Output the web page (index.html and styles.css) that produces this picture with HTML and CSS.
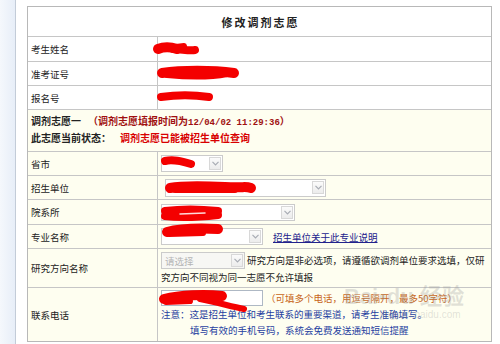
FILE: index.html
```html
<!DOCTYPE html>
<html lang="zh-CN">
<head>
<meta charset="utf-8">
<title>修改调剂志愿</title>
<link rel="stylesheet" href="styles.css">
</head>
<body>
<div class="page">
  <div class="side"></div>
  <div class="main">
    <div class="form">
      <div class="row title">修改调剂志愿</div>

      <div class="row h25">
        <div class="lbl">考生姓名</div>
        <div class="val">
          <svg class="mark" style="left:-5px;top:6px" width="46" height="12" viewBox="0 0 46 12"><path class="fat" d="M5 6 C 10 4, 18 4, 24 6" /><path d="M20 6 C 28 6, 36 8, 42 7" /><path class="thin" d="M23 4 L 31 3" /></svg>
        </div>
      </div>
      <div class="row h24">
        <div class="lbl">准考证号</div>
        <div class="val">
          <svg class="mark" style="left:-1px;top:4px" width="82" height="14" viewBox="0 0 82 14"><path class="fat" d="M5 7 C 25 4, 55 4, 77 7" /><path class="thin" d="M10 9 C 30 11, 55 11, 70 8" /></svg>
        </div>
      </div>
      <div class="row h24">
        <div class="lbl">报名号</div>
        <div class="val">
          <svg class="mark" style="left:-1px;top:6px" width="56" height="10" viewBox="0 0 56 10"><path d="M4 5 C 18 3, 38 3, 52 5" /></svg>
        </div>
      </div>

      <div class="row cream status">
        <div class="line">调剂志愿一<span class="time">（调剂志愿填报时间为<span class="mono">12/04/02 11:29:36</span>）</span></div>
        <div class="line">此志愿当前状态：<span class="state">调剂志愿已能被招生单位查询</span></div>
      </div>

      <div class="row cream h24">
        <div class="lbl">省市</div>
        <div class="val">
          <span class="sel w62"><span class="arr"><svg width="7" height="5" viewBox="0 0 7 5"><path d="M0.5 0.8 L3.5 3.8 L6.5 0.8"/></svg></span></span>
          <svg class="mark" style="left:3px;top:4px" width="34" height="13" viewBox="0 0 34 13"><path d="M4 5 C 12 3, 20 5, 30 8" /></svg>
        </div>
      </div>
      <div class="row cream h24">
        <div class="lbl">招生单位</div>
        <div class="val">
          <span class="sel w161 off4 tall"><span class="arr"><svg width="7" height="5" viewBox="0 0 7 5"><path d="M0.5 0.8 L3.5 3.8 L6.5 0.8"/></svg></span></span>
          <svg class="mark" style="left:7px;top:4px" width="92" height="15" viewBox="0 0 92 15"><path class="fat" d="M5 8 C 20 5, 40 6, 60 7 S 80 6, 86 8" /><path class="thin" d="M10 10 L 70 10" /></svg>
        </div>
      </div>
      <div class="row cream h25">
        <div class="lbl">院系所</div>
        <div class="val">
          <span class="sel w134"><span class="arr"><svg width="7" height="5" viewBox="0 0 7 5"><path d="M0.5 0.8 L3.5 3.8 L6.5 0.8"/></svg></span></span>
          <svg class="mark" style="left:2px;top:5px" width="64" height="16" viewBox="0 0 64 16"><path d="M5 6 C 20 4, 40 4, 58 6" /><path d="M5 11 C 20 13, 40 12, 58 10" /><path class="streak" d="M20 9 L 45 8" /></svg>
        </div>
      </div>
      <div class="row cream h24">
        <div class="lbl">专业名称</div>
        <div class="val">
          <span class="sel w102"><span class="arr"><svg width="7" height="5" viewBox="0 0 7 5"><path d="M0.5 0.8 L3.5 3.8 L6.5 0.8"/></svg></span></span>
          <a class="link" href="#">招生单位关于此专业说明</a>
          <svg class="mark" style="left:5px;top:0px" width="60" height="14" viewBox="0 0 60 14"><path class="fat" d="M4 7 C 15 4, 35 3, 55 4" /><path class="thin" d="M6 9 L 40 8" /></svg>
        </div>
      </div>
      <div class="row cream h39">
        <div class="lbl">研究方向名称</div>
        <div class="val block dir">
          <span class="sel w84 dis"><span class="ph">请选择</span><span class="arr"><svg width="7" height="5" viewBox="0 0 7 5"><path d="M0.5 0.8 L3.5 3.8 L6.5 0.8"/></svg></span></span>研究方向是非必选项，请遵循欲调剂单位要求选填，仅研究方向不同视为同一志愿不允许填报
        </div>
      </div>
      <div class="row cream h54">
        <div class="lbl">联系电话</div>
        <div class="val block phone">
          <div class="pline"><span class="inp"></span><span class="hint">（可填多个电话，用逗号隔开，最多50字符）</span></div>
          <div class="note">注意：这是招生单位和考生联系的重要渠道，请考生准确填写。</div>
          <div class="note ind">填写有效的手机号码，系统会免费发送通知短信提醒</div>
          <svg class="mark" style="left:2px;top:2px" width="90" height="24" viewBox="0 0 90 24"><path class="fat" d="M4 9 C 20 5, 45 4, 62 6" /><path class="thin" d="M40 9 C 55 12, 70 16, 84 19" /><path class="thin" d="M6 12 L 30 11" /></svg>
        </div>
      </div>
    </div>
    <div class="wm"><span class="wm-big">Bai<span class="paw">●</span>du 经验</span><span class="wm-small">jingyan.baidu.com</span></div>
  </div>
</div>
</body>
</html>
```

FILE: styles.css
```css
* { box-sizing: border-box; }
html, body { margin: 0; padding: 0; background: #fff; }
body {
  font-family: "Noto Sans CJK SC", "Noto Sans", sans-serif;
  font-size: 9.5px;
  color: #222;
}
.page { display: flex; height: 344px; overflow: hidden; }
.side {
  width: 16px;
  flex: none;
  background: linear-gradient(to right, #f5f8fc, #e7eef8);
  border-right: 1px solid #c3ccd8;
}
.main { position: relative; padding: 6px 0 0 11px; }
.form { width: 465px; border: 1px solid #b8b8b8; }

.row { display: flex; border-top: 1px solid #c6c6c6; }
.row.title {
  border-top: 0;
  height: 29px;
  justify-content: center;
  align-items: center;
  font-size: 11px;
  font-weight: bold;
  letter-spacing: 2px;
  padding-left: 2px;
  color: #222;
}
.h24 { height: 24px; }
.h25 { height: 25px; }
.h39 { height: 39px; }
.h54 { height: 54px; }
.cream { background: #fefef0; }

.lbl {
  width: 129px;
  flex: none;
  padding-left: 3px;
  display: flex;
  align-items: center;
}
.val {
  flex: 1;
  border-left: 1px solid #c6c6c6;
  padding-left: 3px;
  display: flex;
  align-items: center;
  position: relative;
}
.val.block { display: block; }

.status {
  height: 42px;
  flex-direction: column;
  padding: 2px 0 0 3px;
  font-weight: bold;
  font-size: 10px;
}
.status .line { height: 17px; line-height: 17px; }
.time { color: #a01010; margin-left: 7px; }
.mono { font-family: "Liberation Mono", monospace; font-size: 9px; }
.state { color: #d80000; margin-left: 9px; }

.sel {
  display: inline-flex;
  align-items: center;
  height: 17px;
  border: 1px solid #cbcbcb;
  background: #fff;
  vertical-align: top;
  justify-content: flex-end;
}
.sel.tall { height: 18px; }
.off4 { margin-left: 4px; }
.w62 { width: 62px; }
.w161 { width: 161px; }
.w134 { width: 134px; }
.w102 { width: 102px; }
.w84 { width: 84px; }
.arr {
  width: 12px;
  height: 13px;
  margin-right: 1px;
  border: 1px solid #d8d8d8;
  background: linear-gradient(#fbfbfb, #ececec);
  display: flex;
  align-items: center;
  justify-content: center;
}
.arr svg path { fill: none; stroke: #a8acb4; stroke-width: 1.2; }
.sel.dis { background: #f7f7f4; justify-content: space-between; margin-right: 2px; }
.ph { color: #b4b4b4; padding-left: 3px; }

.link { color: #22228c; text-decoration: underline; margin-left: 10px; }

.dir { padding-top: 3px; line-height: 16px; }

.phone { padding-top: 2px; line-height: 16px; }
.pline { height: 16px; display: flex; align-items: center; }
.inp {
  width: 102px;
  height: 16px;
  border: 1px solid #aeb8c4;
  background: #fff;
}
.hint { color: #c8661a; margin-left: 3px; }
.note { color: #1f3ea0; }
.note.ind { padding-left: 29px; }

.mark { position: absolute; overflow: visible; }
.mark path {
  fill: none;
  stroke: #f40000;
  stroke-width: 8;
  stroke-linecap: round;
  stroke-linejoin: round;
}
.mark path.fat { stroke-width: 10; }
.mark path.thin { stroke-width: 6; }
.mark path.streak { stroke: #ffd9d9; stroke-width: 1.5; }

.wm {
  position: absolute;
  left: 328px;
  top: 284px;
  display: flex;
  flex-direction: column;
  align-items: flex-start;
  color: rgba(150, 150, 150, 0.28);
  font-family: "Liberation Sans", sans-serif;
  pointer-events: none;
}
.wm-big { font-size: 22px; font-weight: bold; line-height: 24px; }
.paw { font-size: 14px; vertical-align: 3px; }
.wm-small { font-size: 10px; margin-left: 36px; line-height: 12px; }
```
